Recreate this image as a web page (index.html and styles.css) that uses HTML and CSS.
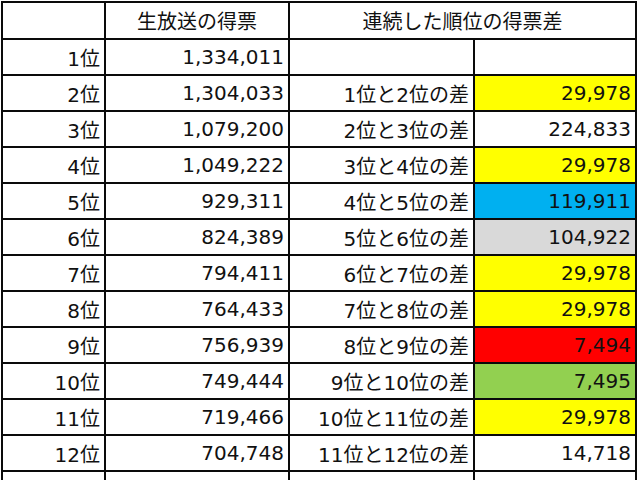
FILE: index.html
```html
<!DOCTYPE html>
<html lang="ja">
<head>
<meta charset="utf-8">
<title>得票表</title>
<link rel="stylesheet" href="styles.css">
</head>
<body>
<div class="sheet">
  <div class="cell head"></div>
  <div class="cell head center">生放送の得票</div>
  <div class="cell head center span2">連続した順位の得票差</div>

  <div class="cell">1位</div><div class="cell">1,334,011</div><div class="cell"></div><div class="cell"></div>
  <div class="cell">2位</div><div class="cell">1,304,033</div><div class="cell">1位と2位の差</div><div class="cell yellow">29,978</div>
  <div class="cell">3位</div><div class="cell">1,079,200</div><div class="cell">2位と3位の差</div><div class="cell">224,833</div>
  <div class="cell">4位</div><div class="cell">1,049,222</div><div class="cell">3位と4位の差</div><div class="cell yellow">29,978</div>
  <div class="cell">5位</div><div class="cell">929,311</div><div class="cell">4位と5位の差</div><div class="cell blue">119,911</div>
  <div class="cell">6位</div><div class="cell">824,389</div><div class="cell">5位と6位の差</div><div class="cell gray">104,922</div>
  <div class="cell">7位</div><div class="cell">794,411</div><div class="cell">6位と7位の差</div><div class="cell yellow">29,978</div>
  <div class="cell">8位</div><div class="cell">764,433</div><div class="cell">7位と8位の差</div><div class="cell yellow">29,978</div>
  <div class="cell">9位</div><div class="cell">756,939</div><div class="cell">8位と9位の差</div><div class="cell red">7,494</div>
  <div class="cell">10位</div><div class="cell">749,444</div><div class="cell">9位と10位の差</div><div class="cell green">7,495</div>
  <div class="cell">11位</div><div class="cell">719,466</div><div class="cell">10位と11位の差</div><div class="cell yellow">29,978</div>
  <div class="cell">12位</div><div class="cell">704,748</div><div class="cell">11位と12位の差</div><div class="cell">14,718</div>
  <div class="cell">13位</div><div class="cell">689,770</div><div class="cell">12位と13位の差</div><div class="cell">14,978</div>
</div>
</body>
</html>
```

FILE: styles.css
```css
html, body {
  margin: 0;
  padding: 0;
  background: #ffffff;
  overflow: hidden;
}

.sheet {
  display: grid;
  grid-template-columns: 101px 182px 183px 160px;
  grid-template-rows: 35px;
  grid-auto-rows: 34px;
  gap: 2px;
  padding: 2px;
  margin: 1px 0 0 1px;
  width: max-content;
  background: #0a0a0a;
  font-family: "DejaVu Sans", "Noto Sans CJK JP", sans-serif;
  font-size: 20px;
  color: #111111;
}

.cell {
  background: #ffffff;
  display: flex;
  align-items: center;
  justify-content: flex-end;
  padding: 0 4px 0 0;
  white-space: nowrap;
  overflow: hidden;
}

.center {
  justify-content: center;
  padding: 0;
}

.span2 {
  grid-column: span 2;
}

.yellow { background: #ffff00; }
.blue { background: #00b0f0; }
.gray { background: #d9d9d9; }
.red { background: #ff0000; }
.green { background: #92d050; }
```
